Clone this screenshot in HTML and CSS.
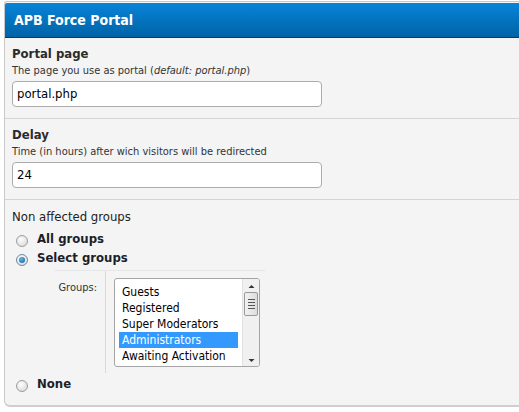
FILE: index.html
```html
<!DOCTYPE html>
<html>
<head>
<meta charset="utf-8">
<link rel="stylesheet" href="styles.css">
</head>
<body>
<div class="panel">
  <div class="panel-head">APB Force Portal</div>

  <div class="section">
    <div class="title">Portal page</div>
    <div class="desc">The page you use as portal (<i>default: portal.php</i>)</div>
    <div class="input">portal.php</div>
  </div>

  <div class="section">
    <div class="title">Delay</div>
    <div class="desc">Time (in hours) after wich visitors will be redirected</div>
    <div class="input">24</div>
  </div>

  <div class="section last">
    <div class="title normal">Non affected groups</div>
    <div class="radio-row"><span class="radio"></span><span class="rlabel">All groups</span></div>
    <div class="radio-row"><span class="radio checked"></span><span class="rlabel">Select groups</span></div>

    <div class="groups">
      <div class="glabel">Groups:</div>
      <div class="gcell">
        <div class="listbox">
          <div class="options">
            <div class="opt">Guests</div>
            <div class="opt">Registered</div>
            <div class="opt">Super Moderators</div>
            <div class="opt sel">Administrators</div>
            <div class="opt">Awaiting Activation</div>
            <div class="opt">Bots</div>
          </div>
          <div class="sbar">
            <svg class="arrow" width="15" height="10" viewBox="0 0 15 10"><path d="M4.5 7 L7.5 4 L10.5 7 Z" fill="#333"/></svg>
            <div class="thumb"><span></span><span></span><span></span><span></span></div>
            <div class="track"></div>
            <svg class="arrow" width="15" height="10" viewBox="0 0 15 10"><path d="M4.5 3 L7.5 6 L10.5 3 Z" fill="#333"/></svg>
          </div>
        </div>
      </div>
    </div>

    <div class="radio-row"><span class="radio"></span><span class="rlabel">None</span></div>
  </div>
</div>
</body>
</html>
```

FILE: styles.css
```css
html, body {
  margin: 0;
  padding: 0;
  background: #ffffff;
}
body {
  font-family: "DejaVu Sans Condensed", "DejaVu Sans", sans-serif;
  color: #333;
}
.panel {
  margin: 1px 0 0 4px;
  border: 1px solid #c8c8c8;
  border-right: none;
  border-bottom: 2px solid #cfcfcf;
  border-radius: 3px 0 0 6px;
  background: #f4f4f4;
  padding-top: 1px;
}
.panel-head {
  height: 34px;
  line-height: 34px;
  padding-left: 9px;
  background: linear-gradient(#0784d8, #0063a6);
  border-bottom: 1px solid #1d3343;
  border-radius: 2px 0 0 0;
  color: #fff;
  font-weight: bold;
  font-size: 14px;
}
.section {
  padding: 8px 7px 11px 7px;
  border-bottom: 1px solid #d4d4d4;
}
.section.last {
  border-bottom: none;
  padding-top: 9px;
  padding-bottom: 12px;
}
.title {
  font-size: 13px;
  line-height: 16px;
  font-weight: bold;
  color: #2b2b2b;
}
.title.normal {
  font-weight: normal;
  color: #222;
}
.desc {
  font-size: 11px;
  line-height: 14px;
  margin-top: 2px;
  color: #333;
}
.input {
  margin-top: 3px;
  width: 304px;
  height: 24px;
  line-height: 24px;
  padding-left: 4px;
  background: #fff;
  border: 1px solid #acacac;
  border-radius: 4px;
  font-size: 13px;
  color: #000;
}
.radio-row {
  display: flex;
  align-items: center;
  height: 19px;
}
.section.last .title + .radio-row {
  margin-top: 4px;
}
.radio {
  box-sizing: border-box;
  width: 12px;
  height: 12px;
  margin: 4px 9px 0 4px;
  border-radius: 50%;
  border: 1px solid #9c9c9c;
  background: radial-gradient(circle at 40% 35%, #fdfdfd, #d4d4d4);
  position: relative;
}
.radio.checked {
  border-color: #6e8aa0;
}
.radio.checked::after {
  content: "";
  position: absolute;
  left: 2px;
  top: 2px;
  width: 6px;
  height: 6px;
  border-radius: 50%;
  background: radial-gradient(circle at 40% 35%, #5fb5ee, #0f5b94);
}
.rlabel {
  font-size: 13px;
  font-weight: bold;
  color: #1c1f2a;
}
.groups {
  display: flex;
  margin: 3px 0 1px 43px;
  width: 210px;
  border-top: 1px solid #e6e6e6;
}
.glabel {
  width: 42px;
  padding-right: 8px;
  text-align: right;
  font-size: 11px;
  color: #333;
  padding-top: 10px;
  border-right: 1px solid #d8d8d8;
}
.gcell {
  padding: 7px 0 6px 8px;
}
.listbox {
  box-sizing: border-box;
  width: 146px;
  height: 89px;
  border: 1px solid #a5a5a5;
  border-radius: 3px;
  background: #fff;
  display: flex;
  overflow: hidden;
}
.options {
  flex: 1;
  padding: 5px 4px 0 4px;
  overflow: hidden;
}
.opt {
  font-size: 12px;
  line-height: 16px;
  padding-left: 3px;
  color: #000;
  white-space: nowrap;
}
.opt.sel {
  background: #3399ff;
  color: #fff;
}
.sbar {
  width: 16px;
  background: #f0f0f0;
  border-left: 1px solid #e2e2e2;
  display: flex;
  flex-direction: column;
  align-items: center;
  padding-top: 2px;
}
.arrow {
  display: block;
  flex: none;
}
.thumb {
  box-sizing: border-box;
  width: 14px;
  height: 24px;
  margin-top: 1px;
  border: 1px solid #9a9a9a;
  border-radius: 2px;
  background: linear-gradient(90deg, #f2f2f2, #dcdcdc);
  display: flex;
  flex-direction: column;
  align-items: center;
  justify-content: center;
  gap: 2px;
}
.thumb span {
  display: block;
  width: 7px;
  height: 1px;
  background: #555;
}
.track {
  flex: 1;
}
```
